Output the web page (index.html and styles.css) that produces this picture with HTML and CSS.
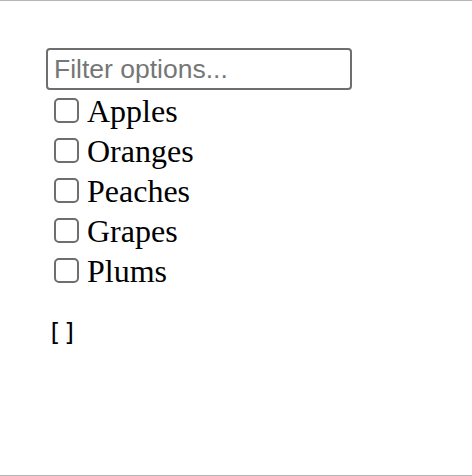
FILE: index.html
```html
<!DOCTYPE html>
<html>
<head>
<meta charset="utf-8">
<link rel="stylesheet" href="styles.css">
</head>
<body>
<div class="frame">
  <input class="filter" type="text" placeholder="Filter options...">
  <div class="options">
    <label class="option"><span class="box"></span><span class="name">Apples</span></label>
    <label class="option"><span class="box"></span><span class="name">Oranges</span></label>
    <label class="option"><span class="box"></span><span class="name">Peaches</span></label>
    <label class="option"><span class="box"></span><span class="name">Grapes</span></label>
    <label class="option"><span class="box"></span><span class="name">Plums</span></label>
  </div>
  <pre class="output">[]</pre>
</div>
</body>
</html>
```
FILE: styles.css
```css
html, body {
  margin: 0;
  padding: 0;
  background: #fff;
}
.frame {
  box-sizing: border-box;
  height: 476px;
  border-top: 1px solid #b5b5b5;
  border-bottom: 1px solid #b5b5b5;
  padding: 47px 0 0 46px;
}
.filter {
  display: block;
  box-sizing: border-box;
  width: 306px;
  height: 42px;
  margin: 0;
  padding: 0 6px;
  border: 2px solid #6e6e6e;
  border-radius: 4px;
  font-family: "Liberation Sans", Arial, sans-serif;
  font-size: 26.5px;
  color: #000;
  background: #fff;
  outline: none;
}
.filter::placeholder {
  color: #767676;
}
.options {
  display: flex;
  flex-direction: column;
}
.option {
  display: flex;
  align-items: center;
  height: 40px;
}
.box {
  box-sizing: border-box;
  width: 25px;
  height: 25px;
  margin-left: 8px;
  border: 2px solid #6e6e6e;
  border-radius: 5px;
  background: #fff;
}
.name {
  margin-left: 8px;
  padding-top: 2px;
  font-family: "Liberation Serif", "Times New Roman", serif;
  font-size: 32px;
  line-height: 36px;
  color: #000;
}
.output {
  margin: 29px 0 0 1px;
  font-family: "DejaVu Sans Mono", monospace;
  font-size: 25px;
  line-height: 28px;
  letter-spacing: 0.5px;
  color: #000;
}
```
